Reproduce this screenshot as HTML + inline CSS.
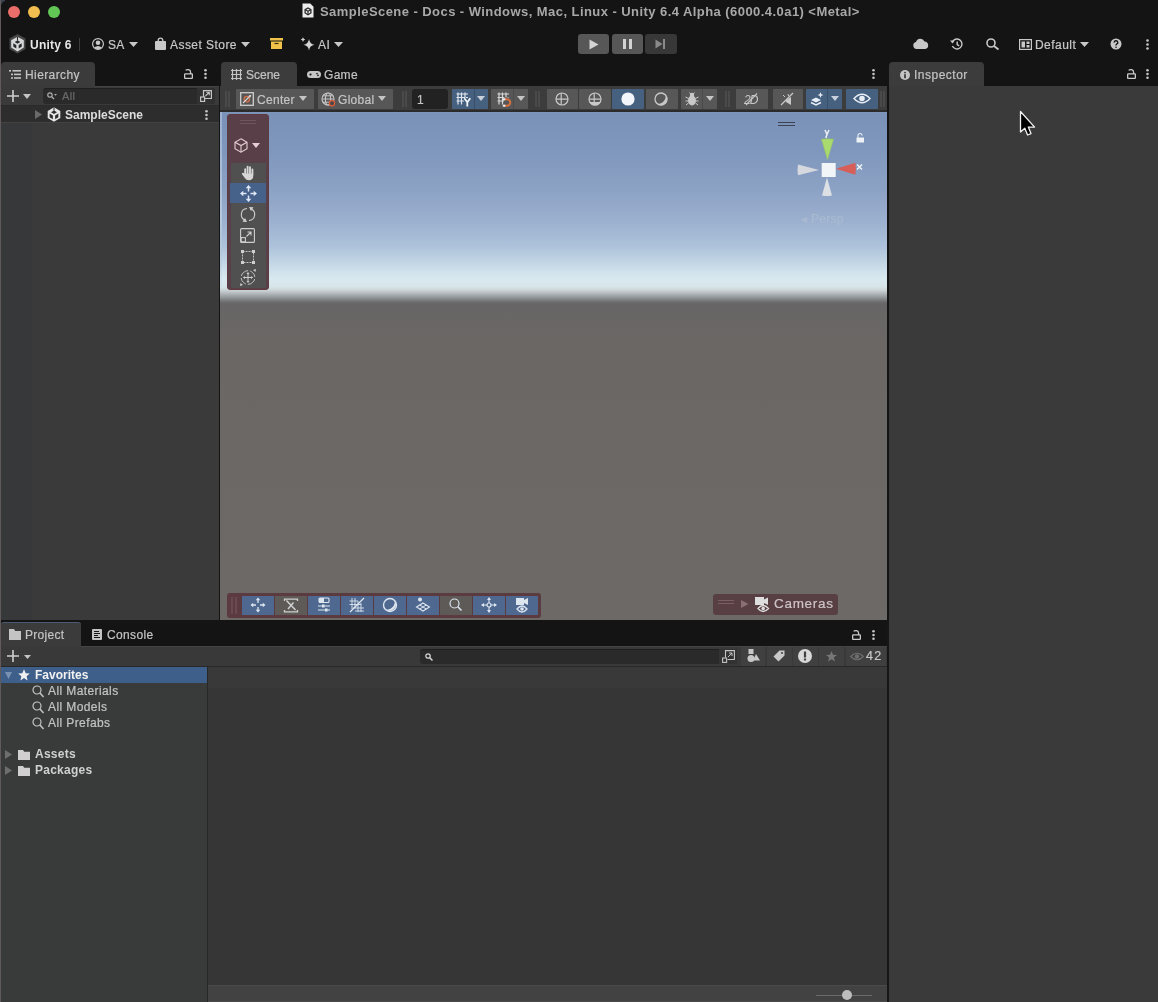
<!DOCTYPE html>
<html><head><meta charset="utf-8">
<style>
*{margin:0;padding:0;box-sizing:border-box}
html,body{width:1158px;height:1002px;overflow:hidden;background:#141414;font-family:"Liberation Sans",sans-serif;color:#c4c4c4}
.a{position:absolute}
.t{position:absolute;white-space:nowrap;font-size:12px;line-height:14px;will-change:transform;-webkit-text-stroke:0.2px currentColor}
svg{position:absolute;overflow:visible}
.t[style*="font-weight:bold"]{-webkit-text-stroke:0}
</style></head><body>
<!-- ============ TITLE BAR ============ -->
<div class="a" style="left:0;top:0;width:5px;height:5px;background:#3c4250"></div><div class="a" style="left:1px;top:1px;width:12px;height:12px;background:#141414;border-top-left-radius:5px"></div><div class="a" style="left:0;top:0;width:1px;height:1002px;background:#625a5a"></div>
<div class="a" style="left:8px;top:6px;width:12px;height:12px;border-radius:50%;background:#e96d68"></div>
<div class="a" style="left:28px;top:6px;width:12px;height:12px;border-radius:50%;background:#f3be50"></div>
<div class="a" style="left:48px;top:6px;width:12px;height:12px;border-radius:50%;background:#62c655"></div>
<svg style="left:302px;top:3px" width="12" height="15" viewBox="0 0 12 15"><path d="M0.5 0.5H8.3L11.5 3.7V14.5H0.5Z" fill="#ececec"/><path d="M6 5L8.9 6.7V10L6 11.7L3.1 10V6.7Z" fill="none" stroke="#2a2a2a" stroke-width="1.3"/><path d="M6 8.3V11.5M6 8.3L3.3 6.8M6 8.3L8.7 6.8" stroke="#2a2a2a" stroke-width="1.2"/></svg>
<div class="t" style="left:320px;top:5px;font-weight:bold;font-size:13px;letter-spacing:0.44px;color:#a8a8a8">SampleScene - Docs - Windows, Mac, Linux - Unity 6.4 Alpha (6000.4.0a1) &lt;Metal&gt;</div>

<!-- ============ MAIN TOOLBAR ============ -->
<svg style="left:9px;top:34px" width="17" height="20" viewBox="0 0 17 20"><path d="M8.5 0L16.5 4.5V15L8.5 19.5L0.5 15V4.5Z" fill="#474747"/><path d="M8.5 2.8L14.8 6.3V13.6L8.5 17.6L2.2 13.6V6.3Z" fill="#d6d8da"/><path d="M8.5 6.2L11.3 8L8.5 9.8L5.7 8Z" fill="#2a2a2a"/><path d="M8.5 2.8V6.5" stroke="#2a2a2a" stroke-width="1.1"/><path d="M4.3 9.2L7.3 10.9V14.5L4.3 12.7Z" fill="#2a2a2a"/><path d="M12.7 9.2L9.7 10.9V14.5L12.7 12.7Z" fill="#2a2a2a"/></svg>
<div class="t" style="left:30px;top:38px;font-weight:bold;color:#e6e6e6;letter-spacing:0.25px">Unity 6</div>
<div class="a" style="left:79px;top:38px;width:1px;height:13px;background:#3c3c3c"></div>
<svg style="left:92px;top:38px" width="12" height="12" viewBox="0 0 12 12"><circle cx="6" cy="6" r="5.4" fill="none" stroke="#c8c8c8" stroke-width="1.2"/><circle cx="6" cy="4.7" r="2.3" fill="#c8c8c8"/><path d="M2.1 9.6Q6 6.3 9.9 9.6A5.3 5.3 0 0 1 2.1 9.6Z" fill="#c8c8c8"/></svg>
<div class="t" style="left:108px;top:38px;color:#c8c8c8;letter-spacing:0.3px">SA</div>
<svg style="left:129px;top:42px" width="9" height="5" viewBox="0 0 9 5"><path d="M0 0H9L4.5 5Z" fill="#c8c8c8"/></svg>
<svg style="left:155px;top:38px" width="11" height="12" viewBox="0 0 11 12"><rect x="0" y="3" width="11" height="9" rx="1" fill="#c8c8c8"/><path d="M3.2 3.5V2.4A2.3 2.3 0 0 1 7.8 2.4V3.5" fill="none" stroke="#c8c8c8" stroke-width="1.3"/></svg>
<div class="t" style="left:170px;top:38px;letter-spacing:0.45px;color:#c8c8c8">Asset Store</div>
<svg style="left:241px;top:42px" width="9" height="5" viewBox="0 0 9 5"><path d="M0 0H9L4.5 5Z" fill="#c8c8c8"/></svg>
<svg style="left:270px;top:38px" width="13" height="11" viewBox="0 0 13 11"><path d="M0 0H13V2.5H0Z" fill="#f0c24a"/><path d="M1 3.5H12V11H1Z" fill="#f0c24a"/><path d="M4.5 5.5H8.5" stroke="#3a2e10" stroke-width="1.2"/></svg>
<svg style="left:300px;top:37px" width="15" height="14" viewBox="0 0 15 14"><path d="M9 2Q9.7 7 14.5 7.8Q9.7 8.6 9 13.6Q8.3 8.6 3.5 7.8Q8.3 7 9 2Z" fill="#d4d4d4"/><path d="M3 0.3Q3.4 2.2 5.3 2.6Q3.4 3 3 4.9Q2.6 3 0.7 2.6Q2.6 2.2 3 0.3Z" fill="#d4d4d4"/></svg>
<div class="t" style="left:318px;top:38px;color:#c8c8c8;letter-spacing:0.5px">AI</div>
<svg style="left:334px;top:42px" width="9" height="5" viewBox="0 0 9 5"><path d="M0 0H9L4.5 5Z" fill="#c8c8c8"/></svg>

<div class="a" style="left:578px;top:34px;width:31px;height:20px;border-radius:3px;background:#575757"></div>
<svg style="left:589px;top:39px" width="10" height="11" viewBox="0 0 10 11"><path d="M0.5 0.5L9.5 5.5L0.5 10.5Z" fill="#d4d4d4"/></svg>
<div class="a" style="left:612px;top:34px;width:31px;height:20px;border-radius:3px;background:#575757"></div>
<div class="a" style="left:623px;top:39px;width:3px;height:10px;background:#d4d4d4"></div>
<div class="a" style="left:629px;top:39px;width:3px;height:10px;background:#d4d4d4"></div>
<div class="a" style="left:645px;top:34px;width:32px;height:20px;border-radius:3px;background:#383838"></div>
<svg style="left:655px;top:39px" width="11" height="10" viewBox="0 0 11 10"><path d="M0.5 0.5L7.5 5L0.5 9.5Z" fill="#8a8a8a"/><path d="M9 0V10" stroke="#8a8a8a" stroke-width="2"/></svg>

<svg style="left:913px;top:39px" width="16" height="10" viewBox="0 0 16 10"><path d="M3.5 10A3.5 3.5 0 0 1 3 3.1A4.5 4.5 0 0 1 11.5 2.5A3.8 3.8 0 0 1 12.2 10Z" fill="#c8c8c8"/></svg>
<svg style="left:950px;top:38px" width="13" height="12" viewBox="0 0 13 12"><path d="M2.2 4.5A5 5 0 1 1 2.4 8" fill="none" stroke="#c8c8c8" stroke-width="1.4"/><path d="M0 2.5L2.6 5.6L4.6 2.4Z" fill="#c8c8c8"/><path d="M7.2 3.5V6.5L9.2 7.8" fill="none" stroke="#c8c8c8" stroke-width="1.4"/></svg>
<svg style="left:986px;top:38px" width="13" height="12" viewBox="0 0 13 12"><circle cx="5" cy="5" r="4" fill="none" stroke="#c8c8c8" stroke-width="1.6"/><path d="M8 8L12.5 11.5" stroke="#c8c8c8" stroke-width="1.8"/></svg>
<svg style="left:1019px;top:39px" width="13" height="11" viewBox="0 0 13 11"><rect x="0.6" y="0.6" width="11.8" height="9.8" fill="none" stroke="#c8c8c8" stroke-width="1.2"/><rect x="2.5" y="2.5" width="3.5" height="6" fill="#c8c8c8"/><rect x="7.5" y="2.5" width="3" height="2.5" fill="#c8c8c8"/><rect x="7.5" y="6" width="3" height="2.5" fill="#c8c8c8"/></svg>
<div class="t" style="left:1035px;top:38px;color:#c8c8c8;letter-spacing:0.45px">Default</div>
<svg style="left:1080px;top:42px" width="9" height="5" viewBox="0 0 9 5"><path d="M0 0H9L4.5 5Z" fill="#c8c8c8"/></svg>
<svg style="left:1110px;top:38px" width="12" height="12" viewBox="0 0 12 12"><circle cx="6" cy="6" r="5.5" fill="#c8c8c8"/><path d="M4.2 4.6A1.8 1.8 0 1 1 6.6 6.2Q6 6.5 6 7.4" fill="none" stroke="#141414" stroke-width="1.4"/><circle cx="6" cy="9.2" r="0.8" fill="#141414"/></svg>
<svg style="left:1146px;top:39px" width="3" height="11" viewBox="0 0 3 11"><circle cx="1.5" cy="1.5" r="1.3" fill="#c8c8c8"/><circle cx="1.5" cy="5.5" r="1.3" fill="#c8c8c8"/><circle cx="1.5" cy="9.5" r="1.3" fill="#c8c8c8"/></svg>

<!-- ============ TABS ROW ============ -->
<div class="a" style="left:1px;top:62px;width:94px;height:25px;background:#3b3b3b;border-radius:4px 4px 0 0"></div>
<svg style="left:9px;top:70px" width="12" height="9" viewBox="0 0 12 9"><rect x="0" y="0" width="2" height="1.6" fill="#c4c4c4"/><rect x="3.5" y="0" width="8.5" height="1.6" fill="#c4c4c4"/><rect x="2" y="3.6" width="2" height="1.6" fill="#c4c4c4"/><rect x="5" y="3.6" width="7" height="1.6" fill="#c4c4c4"/><rect x="2" y="7.2" width="2" height="1.6" fill="#c4c4c4"/><rect x="5" y="7.2" width="7" height="1.6" fill="#c4c4c4"/></svg>
<div class="t" style="left:25px;top:68px;letter-spacing:0.4px">Hierarchy</div>
<svg style="left:184px;top:69px" width="9" height="10" viewBox="0 0 9 10"><rect x="0.65" y="4.9" width="7.7" height="4.45" rx="0.6" fill="none" stroke="#cacaca" stroke-width="1.3"/><path d="M1.6 1.3Q3 0.4 4.6 0.7Q6.6 1.2 6.6 3.2V4.9" fill="none" stroke="#cacaca" stroke-width="1.3"/></svg>
<svg style="left:204px;top:69px" width="3" height="10" viewBox="0 0 3 10"><circle cx="1.5" cy="1.3" r="1.3" fill="#c4c4c4"/><circle cx="1.5" cy="5" r="1.3" fill="#c4c4c4"/><circle cx="1.5" cy="8.7" r="1.3" fill="#c4c4c4"/></svg>

<div class="a" style="left:221px;top:62px;width:76px;height:24px;background:#3c3c3c;border-radius:4px 4px 0 0"></div>
<svg style="left:231px;top:69px" width="11" height="11" viewBox="0 0 11 11"><path d="M1.5 0V11M5.5 0V11M9.5 0V11M0 1.5H11M0 5.5H11M0 9.5H11" stroke="#c4c4c4" stroke-width="1.2"/></svg>
<div class="t" style="left:246px;top:68px">Scene</div>
<svg style="left:307px;top:71px" width="14" height="7" viewBox="0 0 14 7"><path d="M3.5 0H10.5A3.5 3.5 0 0 1 10.5 7H3.5A3.5 3.5 0 0 1 3.5 0Z" fill="#c4c4c4"/><circle cx="3.5" cy="3.5" r="1.1" fill="#141414"/><circle cx="10" cy="2.6" r="0.8" fill="#141414"/><circle cx="11" cy="4.4" r="0.8" fill="#141414"/></svg>
<div class="t" style="left:324px;top:68px;letter-spacing:0.3px">Game</div>
<svg style="left:872px;top:69px" width="3" height="10" viewBox="0 0 3 10"><circle cx="1.5" cy="1.3" r="1.3" fill="#c4c4c4"/><circle cx="1.5" cy="5" r="1.3" fill="#c4c4c4"/><circle cx="1.5" cy="8.7" r="1.3" fill="#c4c4c4"/></svg>

<div class="a" style="left:889px;top:62px;width:95px;height:24px;background:#3c3c3c;border-radius:4px 4px 0 0"></div>
<svg style="left:900px;top:70px" width="10" height="10" viewBox="0 0 10 10"><circle cx="5" cy="5" r="5" fill="#c4c4c4"/><rect x="4.1" y="4.2" width="1.8" height="4" fill="#3c3c3c"/><circle cx="5" cy="2.6" r="0.95" fill="#3c3c3c"/></svg>
<div class="t" style="left:914px;top:68px;letter-spacing:0.5px">Inspector</div>
<svg style="left:1127px;top:69px" width="9" height="10" viewBox="0 0 9 10"><rect x="0.65" y="4.9" width="7.7" height="4.45" rx="0.6" fill="none" stroke="#cacaca" stroke-width="1.3"/><path d="M1.6 1.3Q3 0.4 4.6 0.7Q6.6 1.2 6.6 3.2V4.9" fill="none" stroke="#cacaca" stroke-width="1.3"/></svg>
<svg style="left:1146px;top:69px" width="3" height="10" viewBox="0 0 3 10"><circle cx="1.5" cy="1.3" r="1.3" fill="#c4c4c4"/><circle cx="1.5" cy="5" r="1.3" fill="#c4c4c4"/><circle cx="1.5" cy="8.7" r="1.3" fill="#c4c4c4"/></svg>

<!-- ============ HIERARCHY ============ -->
<div class="a" style="left:1px;top:86px;width:218px;height:534px;background:#3a3a3a"></div><div class="a" style="left:1px;top:122px;width:31px;height:498px;background:#37383a"></div><div class="a" style="left:1px;top:122px;width:218px;height:1px;background:#424242"></div>
<div class="a" style="left:1px;top:86px;width:218px;height:19px;background:#3a3a3a;border-top:1px solid #434343"></div><div class="a" style="left:1px;top:86px;width:94px;height:1px;background:#3a3a3a"></div>
<div class="a" style="left:1px;top:105px;width:218px;height:1px;background:#2a2a2a"></div>
<svg style="left:7px;top:90px" width="12" height="12" viewBox="0 0 12 12"><path d="M6 0V12M0 6H12" stroke="#d0d0d0" stroke-width="1.6"/></svg>
<svg style="left:23px;top:94px" width="8" height="5" viewBox="0 0 8 5"><path d="M0 0H8L4 5Z" fill="#c4c4c4"/></svg>
<div class="a" style="left:43px;top:88px;width:172px;height:16px;border-radius:3px;background:#2a2a2a;border-top:1px solid #1f1f1f"></div>
<div class="a" style="left:197px;top:88px;width:18px;height:16px;border-radius:0 3px 3px 0;background:#313131"></div>
<svg style="left:47px;top:92px" width="10" height="8" viewBox="0 0 10 8"><circle cx="3" cy="3" r="2.2" fill="none" stroke="#b0b0b0" stroke-width="1.2"/><path d="M4.6 4.6L7 7" stroke="#b0b0b0" stroke-width="1.3"/><path d="M7 2H10L8.5 3.8Z" fill="#b0b0b0"/></svg>
<div class="t" style="left:62px;top:89px;color:#696969;font-size:11px;letter-spacing:0.3px">All</div>
<svg style="left:200px;top:90px" width="12" height="12" viewBox="0 0 12 12"><path d="M3.5 7V0.6H11.4V8.5H5" fill="none" stroke="#c4c4c4" stroke-width="1.2"/><rect x="0.6" y="7" width="4" height="4.4" fill="none" stroke="#c4c4c4" stroke-width="1.2"/><path d="M5.5 6L9.3 2.2M6.3 2.2H9.3V5.2" fill="none" stroke="#c4c4c4" stroke-width="1.1"/></svg>
<div class="a" style="left:1px;top:106px;width:218px;height:16px;background:#2d2d2d"></div>
<svg style="left:35px;top:110px" width="7" height="9" viewBox="0 0 7 9"><path d="M0 0L7 4.5L0 9Z" fill="#6a6a6a"/></svg>
<svg style="left:47px;top:107px" width="14" height="15" viewBox="0 0 14 15"><path d="M7 0.3L13.3 3.9V11.1L7 14.7L0.7 11.1V3.9Z" fill="#e6e6e6"/><path d="M7 3.6L10 5.3L7 7L4 5.3Z" fill="#2d2d2d"/><path d="M7 0.3V3.8" stroke="#2d2d2d" stroke-width="1"/><path d="M2.6 6.6L5.9 8.5V12.2L2.6 10.3Z" fill="#2d2d2d"/><path d="M11.4 6.6L8.1 8.5V12.2L11.4 10.3Z" fill="#2d2d2d"/></svg>
<div class="t" style="left:65px;top:108px;font-weight:bold;color:#dcdcdc">SampleScene</div>
<svg style="left:205px;top:110px" width="3" height="10" viewBox="0 0 3 10"><circle cx="1.5" cy="1.3" r="1.3" fill="#c4c4c4"/><circle cx="1.5" cy="5" r="1.3" fill="#c4c4c4"/><circle cx="1.5" cy="8.7" r="1.3" fill="#c4c4c4"/></svg>

<!-- ============ SCENE ============ -->
<div class="a" style="left:220px;top:86px;width:667px;height:25px;background:#3c3c3c"></div>
<div class="a" style="left:220px;top:110px;width:667px;height:2px;background:#2b2b2b"></div>
<div class="a" style="left:225px;top:91px;width:2px;height:16px;background:#4a4a4a"></div><div class="a" style="left:228px;top:91px;width:2px;height:16px;background:#4a4a4a"></div>
<div class="a" style="left:236px;top:89px;width:78px;height:20px;border-radius:1px;background:#575757"></div>
<svg style="left:240px;top:92px" width="14" height="14" viewBox="0 0 14 14"><rect x="0.7" y="0.7" width="12.6" height="12.6" fill="#555" stroke="#cfcfcf" stroke-width="1.3"/><circle cx="6.8" cy="7.2" r="2.7" fill="none" stroke="#cf6e48" stroke-width="1.4"/><path d="M3 11L10.5 3.5" stroke="#d8d8d8" stroke-width="1.1"/><path d="M11.3 2.7L8.6 3.6L10.4 5.4Z" fill="#d8d8d8"/></svg>
<div class="t" style="left:257px;top:93px;letter-spacing:0.3px">Center</div>
<svg style="left:299px;top:96px" width="8" height="5" viewBox="0 0 8 5"><path d="M0 0H8L4 5Z" fill="#c4c4c4"/></svg>
<div class="a" style="left:318px;top:89px;width:75px;height:20px;border-radius:1px;background:#575757"></div>
<svg style="left:321px;top:92px" width="15" height="15" viewBox="0 0 15 15"><circle cx="7" cy="7" r="6" fill="none" stroke="#c4c4c4" stroke-width="1.1"/><ellipse cx="7" cy="7" rx="2.6" ry="6" fill="none" stroke="#c4c4c4" stroke-width="1.1"/><path d="M1 7H13M2 3.8H12M2 10.2H12" stroke="#c4c4c4" stroke-width="1"/><circle cx="11" cy="11.2" r="2.6" fill="#484848" stroke="#e05a3a" stroke-width="1.2"/></svg>
<div class="t" style="left:338px;top:93px;letter-spacing:0.3px">Global</div>
<svg style="left:378px;top:96px" width="8" height="5" viewBox="0 0 8 5"><path d="M0 0H8L4 5Z" fill="#c4c4c4"/></svg>
<div class="a" style="left:402px;top:91px;width:2px;height:16px;background:#4a4a4a"></div><div class="a" style="left:405px;top:91px;width:2px;height:16px;background:#4a4a4a"></div>
<div class="a" style="left:412px;top:89px;width:36px;height:20px;border-radius:3px;background:#222"></div>
<div class="t" style="left:417px;top:93px;color:#c4c4c4">1</div>
<div class="a" style="left:452px;top:89px;width:36px;height:20px;border-radius:1px;background:#46607f"></div>
<div class="a" style="left:474px;top:89px;width:1px;height:20px;background:#3a4f69"></div>
<svg style="left:456px;top:92px" width="16" height="15" viewBox="0 0 16 15"><path d="M2 0.5V12.5M5.5 0.5V12.5M9 0.5V8M0.5 2H12M0.5 5.5H12M0.5 9H8" stroke="#dfe6f0" stroke-width="1.2"/><path d="M8.3 6.3L11.3 10.2L14.3 6.3M11.3 10.2V14.5" fill="none" stroke="#46607f" stroke-width="3.6"/><path d="M8.3 6.3L11.3 10.2L14.3 6.3M11.3 10.2V14.5" fill="none" stroke="#f0f4f8" stroke-width="1.8"/></svg>
<svg style="left:477px;top:96px" width="8" height="5" viewBox="0 0 8 5"><path d="M0 0H8L4 5Z" fill="#c8d0dc"/></svg>
<div class="a" style="left:491px;top:89px;width:37px;height:20px;border-radius:1px;background:#575757"></div>
<div class="a" style="left:513px;top:89px;width:1px;height:20px;background:#4a4a4a"></div>
<svg style="left:497px;top:92px" width="16" height="15" viewBox="0 0 16 15"><path d="M2 0.5V12.5M5.5 0.5V12.5M9 0.5V7M0.5 2H12M0.5 5.5H12M0.5 9H7" stroke="#d8d8d8" stroke-width="1.2"/><path d="M7 7.3H10A3.2 3.2 0 0 1 10 13.7H7" fill="none" stroke="#575757" stroke-width="4"/><path d="M7 7.3H10A3.2 3.2 0 0 1 10 13.7H7" fill="none" stroke="#d9703f" stroke-width="2"/><rect x="5.8" y="6.3" width="2.5" height="2" fill="#eee"/><rect x="5.8" y="12.7" width="2.5" height="2" fill="#eee"/></svg>
<svg style="left:517px;top:96px" width="8" height="5" viewBox="0 0 8 5"><path d="M0 0H8L4 5Z" fill="#c4c4c4"/></svg>
<div class="a" style="left:535px;top:91px;width:2px;height:16px;background:#4a4a4a"></div><div class="a" style="left:538px;top:91px;width:2px;height:16px;background:#4a4a4a"></div>
<div class="a" style="left:547px;top:89px;width:31px;height:20px;border-radius:1px;background:#575757"></div>
<div class="a" style="left:579px;top:89px;width:32px;height:20px;border-radius:1px;background:#575757"></div>
<div class="a" style="left:612px;top:89px;width:32px;height:20px;border-radius:1px;background:#46607f"></div>
<div class="a" style="left:646px;top:89px;width:32px;height:20px;border-radius:1px;background:#575757"></div>
<svg style="left:555px;top:92px" width="14" height="14" viewBox="0 0 14 14"><circle cx="7" cy="7" r="6" fill="none" stroke="#c8c8c8" stroke-width="1.2"/><path d="M1 7.2H13M6.2 1V13" stroke="#c8c8c8" stroke-width="1.2"/></svg>
<svg style="left:588px;top:92px" width="14" height="14" viewBox="0 0 14 14"><circle cx="7" cy="7" r="6" fill="none" stroke="#c8c8c8" stroke-width="1.2"/><path d="M1.5 10A6 6 0 0 0 12.5 10Z" fill="#c8c8c8"/><path d="M1 7.2H13M6.2 1V13" stroke="#c8c8c8" stroke-width="1.2"/></svg>
<svg style="left:621px;top:92px" width="14" height="14" viewBox="0 0 14 14"><circle cx="7" cy="7" r="6.6" fill="#f2f6fb"/></svg>
<svg style="left:654px;top:92px" width="15" height="14" viewBox="0 0 15 14"><circle cx="7" cy="7" r="6" fill="none" stroke="#c8c8c8" stroke-width="1.3"/><path d="M2.5 11.5A6.3 6.3 0 0 0 11.5 2.5A7.5 7.5 0 0 1 2.5 11.5Z" fill="#c8c8c8"/></svg>
<div class="a" style="left:681px;top:89px;width:36px;height:20px;border-radius:1px;background:#575757"></div>
<div class="a" style="left:702px;top:89px;width:1px;height:20px;background:#4a4a4a"></div>
<svg style="left:685px;top:92px" width="14" height="14" viewBox="0 0 14 14"><ellipse cx="7" cy="8.5" rx="4" ry="5" fill="#c8c8c8"/><circle cx="7" cy="3" r="2.2" fill="#c8c8c8"/><path d="M0.5 5L3.5 6.5M0.5 9H3M1 13L3.5 11M13.5 5L10.5 6.5M13.5 9H11M13 13L10.5 11M4.5 0.5L5.8 2M9.5 0.5L8.2 2" stroke="#c8c8c8" stroke-width="1"/></svg>
<svg style="left:706px;top:96px" width="8" height="5" viewBox="0 0 8 5"><path d="M0 0H8L4 5Z" fill="#c4c4c4"/></svg>
<div class="a" style="left:725px;top:91px;width:2px;height:16px;background:#4a4a4a"></div><div class="a" style="left:728px;top:91px;width:2px;height:16px;background:#4a4a4a"></div>
<div class="a" style="left:736px;top:89px;width:32px;height:20px;border-radius:1px;background:#575757"></div>
<svg style="left:744px;top:92px;will-change:transform" width="16" height="14" viewBox="0 0 16 14"><text x="0" y="11.5" font-family="Liberation Sans" font-size="12" fill="#c8c8c8" letter-spacing="-1" font-style="italic">2D</text><path d="M2 13L13 1.5" stroke="#c8c8c8" stroke-width="1.1"/></svg>
<div class="a" style="left:773px;top:89px;width:30px;height:20px;border-radius:1px;background:#575757"></div>
<svg style="left:780px;top:92px" width="14" height="14" viewBox="0 0 14 14"><path d="M1 13L13 1" stroke="#c8c8c8" stroke-width="1.2"/><path d="M6 8L11 5V13L6 10Z" fill="#c8c8c8"/><path d="M3 3L5 5M8 2L8.5 4" stroke="#c8c8c8" stroke-width="1"/></svg>
<div class="a" style="left:806px;top:89px;width:36px;height:20px;border-radius:1px;background:#46607f"></div>
<div class="a" style="left:827px;top:89px;width:1px;height:20px;background:#3a4f69"></div>
<svg style="left:810px;top:92px" width="14" height="14" viewBox="0 0 14 14"><path d="M1 8L6 5.5L11 8L6 10.5Z" fill="#e8eef6"/><path d="M1 10.5L6 13L11 10.5" fill="none" stroke="#e8eef6" stroke-width="1.4"/><path d="M10.5 0L11.3 2.2L13.5 3L11.3 3.8L10.5 6L9.7 3.8L7.5 3L9.7 2.2Z" fill="#e8eef6"/></svg>
<svg style="left:831px;top:96px" width="8" height="5" viewBox="0 0 8 5"><path d="M0 0H8L4 5Z" fill="#c8d0dc"/></svg>
<div class="a" style="left:846px;top:89px;width:32px;height:20px;border-radius:1px;background:#46607f"></div>
<svg style="left:853px;top:93px" width="18" height="11" viewBox="0 0 18 11"><path d="M1 5.5Q9 -3 17 5.5Q9 14 1 5.5Z" fill="none" stroke="#e8eef6" stroke-width="1.4"/><circle cx="9" cy="5.5" r="2.8" fill="#e8eef6"/></svg>
<div class="a" style="left:880px;top:91px;width:2px;height:16px;background:#4a4a4a"></div><div class="a" style="left:883px;top:91px;width:2px;height:16px;background:#4a4a4a"></div>
<div class="a" style="left:220px;top:112px;width:667px;height:508px;background:linear-gradient(180deg,#7f97bd 0px,#7a92b8 2px,#7f97bc 38px,#8ca2c5 78px,#9bb0ce 108px,#acc1da 133px,#c2d5e5 150px,#d0e2eb 160px,#d9e9ef 168px,#d7e5e8 175px,#cdd5d7 178px,#bfc5c8 180px,#a6abae 183px,#8f9396 186px,#7d7f82 188px,#6e6d70 190px,#686566 192px,#6a6765 228px,#6c6866 338px,#6c6967 508px)"></div><div class="a" style="left:220px;top:112px;width:2px;height:180px;background:linear-gradient(#9cb0d0,#b5c8de 60%,rgba(200,215,230,0))"></div>
<!-- tools overlay -->
<div class="a" style="left:227px;top:114px;width:42px;height:176px;border-radius:3px;background:#583f48;border:1px solid #5e3a40"></div>
<div class="a" style="left:240px;top:120px;width:16px;height:1px;background:#6e5660"></div><div class="a" style="left:240px;top:123px;width:16px;height:1px;background:#6e5660"></div>
<svg style="left:234px;top:138px" width="14" height="15" viewBox="0 0 14 15"><path d="M7 0.8L13 4.2V10.8L7 14.2L1 10.8V4.2Z" fill="none" stroke="#e6cfd4" stroke-width="1.1"/><path d="M1 4.2L7 7.6L13 4.2M7 7.6V14.2" fill="none" stroke="#e6cfd4" stroke-width="1.1"/></svg>
<svg style="left:252px;top:143px" width="8" height="5" viewBox="0 0 8 5"><path d="M0 0H8L4 5Z" fill="#e6cfd4"/></svg>
<div class="a" style="left:231px;top:163px;width:35px;height:125px;background:#505050"></div>
<div class="a" style="left:230px;top:183px;width:36px;height:20px;background:#46618a"></div>
<svg style="left:241px;top:165px" width="15" height="16" viewBox="0 0 15 16"><path d="M4.2 9V4.2M6.6 8.2V1.6M9 8.2V2.2M11.4 9V4.4" stroke="#d6d6d6" stroke-width="1.9" stroke-linecap="round"/><path d="M3.3 8.4H12.3V10.5Q12.3 15.2 7.8 15.2Q5.2 15.2 3.8 13L1 9.3A1.1 1.1 0 0 1 2.7 8Z" fill="#d6d6d6"/></svg>
<svg style="left:240px;top:185px" width="17" height="17" viewBox="0 0 17 17"><path d="M8.5 2.5V6.5M8.5 10.5V14.5M2.5 8.5H6.5M10.5 8.5H14.5" stroke="#dfe8f4" stroke-width="1.5"/><path d="M8.5 0L11.3 3.3H5.7ZM8.5 17L11.3 13.7H5.7ZM0 8.5L3.3 5.7V11.3ZM17 8.5L13.7 5.7V11.3Z" fill="#dfe8f4"/></svg>
<svg style="left:240px;top:207px" width="16" height="15" viewBox="0 0 16 15"><path d="M10.5 1.8A6 6 0 0 1 9 13.5M5.5 13.2A6 6 0 0 1 7 1.5" fill="none" stroke="#cfcfcf" stroke-width="1.1"/><path d="M9 0L13.5 0.3L11 4Z" fill="#cfcfcf"/><path d="M7 15L2.5 14.7L5 11Z" fill="#cfcfcf"/></svg>
<svg style="left:240px;top:228px" width="15" height="15" viewBox="0 0 15 15"><rect x="0.6" y="0.6" width="13.8" height="13.8" rx="1" fill="none" stroke="#cfcfcf" stroke-width="1.1"/><rect x="1.2" y="9.6" width="4.2" height="4.2" fill="#4f4f4f" stroke="#cfcfcf" stroke-width="1.1"/><path d="M6.5 8.5L11 4M7.5 4H11V7.5" fill="none" stroke="#cfcfcf" stroke-width="1.1"/></svg>
<svg style="left:241px;top:250px" width="14" height="14" viewBox="0 0 14 14"><rect x="1.5" y="1.5" width="11" height="11" fill="none" stroke="#cfcfcf" stroke-width="0.9" stroke-dasharray="2 1"/><rect x="0" y="0" width="3" height="3" fill="#cfcfcf"/><rect x="11" y="0" width="3" height="3" fill="#cfcfcf"/><rect x="0" y="11" width="3" height="3" fill="#cfcfcf"/><rect x="11" y="11" width="3" height="3" fill="#cfcfcf"/></svg>
<svg style="left:240px;top:269px" width="16" height="17" viewBox="0 0 16 17"><path d="M12.5 3.5A6.5 6.5 0 0 1 12.5 13.5M3.5 13.5A6.5 6.5 0 0 1 3.5 3.5M3.5 3.5A6.5 6.5 0 0 1 12.5 3.5M12.5 13.5A6.5 6.5 0 0 1 3.5 13.5" fill="none" stroke="#cfcfcf" stroke-width="0.9" stroke-dasharray="5 2"/><path d="M8 4V13M3.5 8.5H12.5" stroke="#cfcfcf" stroke-width="1"/><path d="M8 3L9.5 5H6.5ZM8 14L9.5 12H6.5ZM3 8.5L5 7V10ZM13 8.5L11 7V10Z" fill="#cfcfcf"/><path d="M16 0L15.5 3L13 1Z M0 17L0.5 14L3 16Z" fill="#cfcfcf"/></svg>
<!-- gizmo -->
<div class="a" style="left:778px;top:122px;width:17px;height:1px;background:#3c4252"></div><div class="a" style="left:778px;top:125px;width:17px;height:1px;background:#3c4252"></div>
<svg style="left:796px;top:128px;filter:blur(0.35px)" width="70" height="70" viewBox="0 0 70 70"><path d="M25.5 11.3Q31.5 10.3 37.5 11.3L31.5 31.5Z" fill="#a9da6e" stroke="#9cc468" stroke-width="0.6"/><path d="M26 67.6Q31 68.6 36 67.6L31 49.5Z" fill="#dcdfe4"/><path d="M2 36.5Q1 42 2 47.3L23 42Z" fill="#d5d8de"/><path d="M59.3 34.7Q60.5 40.7 59.3 46.7L39.9 40.7Z" fill="#d65f5a"/><rect x="25.7" y="35" width="14" height="14" fill="#f2f5f8"/><path d="M29 2L31 6.5L33 2M31 6.5L29.8 10" fill="none" stroke="#eef2f6" stroke-width="1.5"/><path d="M61 36.5L66 41.5M66 36.5L61 41.5" stroke="#eef2f6" stroke-width="1.5"/><rect x="60.5" y="9.5" width="7.5" height="5" fill="#eef2f6"/><path d="M62 9.5V7.5A2 2 0 0 1 66 7.5" fill="none" stroke="#eef2f6" stroke-width="1.1"/></svg>
<div class="t" style="left:801px;top:212px;color:#a9bad0;font-size:12px;letter-spacing:0.3px">&#9666; Persp</div>
<!-- bottom overlay -->
<div class="a" style="left:227px;top:593px;width:314px;height:25px;border-radius:3px;background:#5b3a40"></div>
<div class="a" style="left:231px;top:597px;width:2px;height:17px;background:#6a4a50"></div><div class="a" style="left:235px;top:597px;width:2px;height:17px;background:#6a4a50"></div>
<div class="a" style="left:242px;top:596px;width:32px;height:19px;background:#4f6890"></div>
<div class="a" style="left:275px;top:596px;width:32px;height:19px;background:#5e5a58"></div>
<div class="a" style="left:308px;top:596px;width:32px;height:19px;background:#4f6890"></div>
<div class="a" style="left:341px;top:596px;width:32px;height:19px;background:#4f6890"></div>
<div class="a" style="left:374px;top:596px;width:32px;height:19px;background:#4f6890"></div>
<div class="a" style="left:407px;top:596px;width:32px;height:19px;background:#4f6890"></div>
<div class="a" style="left:440px;top:596px;width:32px;height:19px;background:#5e5a58"></div>
<div class="a" style="left:473px;top:596px;width:32px;height:19px;background:#4f6890"></div>
<div class="a" style="left:506px;top:596px;width:32px;height:19px;background:#4f6890"></div>
<svg style="left:250px;top:597px" width="16" height="16" viewBox="0 0 16 16"><path d="M8 2.5V6M8 10V13.5M2.5 8H6M10 8H13.5" stroke="#dde5ef" stroke-width="1.3"/><path d="M8 0.5L10.3 3.2H5.7ZM8 15.5L10.3 12.8H5.7ZM0.5 8L3.2 5.7V10.3ZM15.5 8L12.8 5.7V10.3Z" fill="#dde5ef"/></svg>
<svg style="left:283px;top:598px" width="16" height="15" viewBox="0 0 16 15"><path d="M1.5 3V1.2H14.5V3M1.5 12V13.8H14.5V12" fill="none" stroke="#d0d0d0" stroke-width="1.3"/><path d="M3.5 2.5L12.5 12M10.5 4.5L5 11" stroke="#d0d0d0" stroke-width="1.5"/></svg>
<svg style="left:316px;top:597px" width="16" height="16" viewBox="0 0 16 16"><rect x="3" y="1" width="10" height="4.5" rx="1" fill="none" stroke="#dde5ef" stroke-width="1.1"/><rect x="3" y="1" width="5" height="4.5" fill="#dde5ef"/><path d="M2 9H14M2 13H14" stroke="#dde5ef" stroke-width="1.1"/><rect x="6" y="7.5" width="2.5" height="3" fill="#dde5ef"/><rect x="9" y="11.5" width="2.5" height="3" fill="#dde5ef"/></svg>
<svg style="left:349px;top:597px" width="16" height="16" viewBox="0 0 16 16"><path d="M3 1V12M6 1V11M9 4V15M12 6V15M0.5 4H9M0.5 7.5H12M4 11H15M6 14H15" stroke="#dde5ef" stroke-width="0.9"/><path d="M1 15L15 1" stroke="#dde5ef" stroke-width="1.2"/></svg>
<svg style="left:382px;top:597px" width="16" height="16" viewBox="0 0 16 16"><circle cx="8" cy="8" r="6.5" fill="none" stroke="#dde5ef" stroke-width="1.4"/><path d="M3.4 12.6A6.6 6.6 0 0 0 12.6 3.4A8 8 0 0 1 3.4 12.6Z" fill="#dde5ef"/></svg>
<svg style="left:415px;top:597px" width="16" height="16" viewBox="0 0 16 16"><circle cx="5" cy="2.5" r="2" fill="#dde5ef"/><path d="M8 6L14.5 10L8 14L1.5 10Z" fill="none" stroke="#dde5ef" stroke-width="1.1"/><path d="M4.8 8L11.2 12M11.2 8L4.8 12" stroke="#dde5ef" stroke-width="1"/></svg>
<svg style="left:448px;top:597px" width="16" height="16" viewBox="0 0 16 16"><circle cx="6.5" cy="6.5" r="4.5" fill="none" stroke="#dde5ef" stroke-width="1.2"/><path d="M9.8 9.8L13.5 13.5" stroke="#dde5ef" stroke-width="1.6"/></svg>
<svg style="left:481px;top:597px" width="16" height="16" viewBox="0 0 16 16"><circle cx="8" cy="8" r="2" fill="none" stroke="#dde5ef" stroke-width="1.2"/><path d="M8 1V6M8 10V15M1 8H6M10 8H15" stroke="#dde5ef" stroke-width="1.1"/><path d="M8 0L10 3H6ZM8 16L10 13H6ZM0 8L3 6V10ZM16 8L13 6V10Z" fill="#dde5ef"/></svg>
<svg style="left:514px;top:597px" width="16" height="16" viewBox="0 0 16 16"><rect x="2" y="1" width="8" height="7" fill="#dde5ef"/><path d="M10 3L14 1V8L10 6Z" fill="#dde5ef"/><path d="M3 12Q8 6 13 12Q8 18 3 12Z" fill="#4f6890" stroke="#dde5ef" stroke-width="1.3"/><circle cx="8" cy="12" r="1.8" fill="#dde5ef"/></svg>
<div class="a" style="left:713px;top:594px;width:125px;height:21px;border-radius:3px;background:#573f44"></div>
<div class="a" style="left:718px;top:600px;width:16px;height:1px;background:#7a6065"></div><div class="a" style="left:718px;top:603px;width:16px;height:1px;background:#7a6065"></div>
<svg style="left:741px;top:600px" width="8" height="8" viewBox="0 0 8 8"><path d="M0 0L7.5 4L0 8Z" fill="#8a7075"/></svg>
<svg style="left:755px;top:597px" width="15" height="15" viewBox="0 0 15 15"><rect x="0" y="0" width="9" height="8" fill="#ddd"/><path d="M9 2.5L13 0.5V8L9 6Z" fill="#ddd"/><path d="M3 11.5Q8 5.5 13.5 11.5Q8 17.5 3 11.5Z" fill="#5b3f44" stroke="#ddd" stroke-width="1.3"/><circle cx="8.2" cy="11.5" r="1.8" fill="#ddd"/></svg>
<div class="t" style="left:774px;top:597px;font-size:13.5px;letter-spacing:0.7px;color:#cdc4c7">Cameras</div>
<!-- ============ PROJECT ============ -->
<div class="a" style="left:1px;top:622px;width:80px;height:25px;background:#3b3b3b;border-radius:3px 3px 0 0;border-top:1px solid #4a5a72"></div>
<svg style="left:9px;top:629px" width="12" height="11" viewBox="0 0 12 11"><path d="M0 0H5L6.2 2H12V11H0Z" fill="#c4c4c4"/></svg>
<div class="t" style="left:25px;top:628px;letter-spacing:0.3px">Project</div>
<svg style="left:92px;top:629px" width="10" height="11" viewBox="0 0 10 11"><rect x="0" y="0" width="10" height="11" rx="1" fill="#c4c4c4"/><path d="M2 2.5H7M2 4.5H8M2 6.5H6M2 8.5H8" stroke="#141414" stroke-width="1"/></svg>
<div class="t" style="left:107px;top:628px;letter-spacing:0.35px">Console</div>
<svg style="left:852px;top:630px" width="9" height="10" viewBox="0 0 9 10"><rect x="0.65" y="4.9" width="7.7" height="4.45" rx="0.6" fill="none" stroke="#cacaca" stroke-width="1.3"/><path d="M1.6 1.3Q3 0.4 4.6 0.7Q6.6 1.2 6.6 3.2V4.9" fill="none" stroke="#cacaca" stroke-width="1.3"/></svg>
<svg style="left:872px;top:630px" width="3" height="10" viewBox="0 0 3 10"><circle cx="1.5" cy="1.3" r="1.3" fill="#c4c4c4"/><circle cx="1.5" cy="5" r="1.3" fill="#c4c4c4"/><circle cx="1.5" cy="8.7" r="1.3" fill="#c4c4c4"/></svg>
<div class="a" style="left:1px;top:646px;width:886px;height:356px;background:#363636"></div>
<div class="a" style="left:1px;top:646px;width:886px;height:20px;background:#393939;border-top:1px solid #454545"></div><div class="a" style="left:1px;top:646px;width:80px;height:1px;background:#393939"></div>
<div class="a" style="left:1px;top:666px;width:886px;height:1px;background:#282828"></div>
<svg style="left:7px;top:650px" width="12" height="12" viewBox="0 0 12 12"><path d="M6 0V12M0 6H12" stroke="#d0d0d0" stroke-width="1.6"/></svg>
<svg style="left:24px;top:655px" width="7" height="4" viewBox="0 0 7 4"><path d="M0 0H7L3.5 4Z" fill="#c4c4c4"/></svg>
<div class="a" style="left:420px;top:649px;width:299px;height:15px;border-radius:3px 0 0 3px;background:#2a2a2a;border-top:1px solid #1f1f1f"></div>
<svg style="left:425px;top:653px" width="8" height="8" viewBox="0 0 8 8"><circle cx="3" cy="3" r="2.2" fill="none" stroke="#d0d0d0" stroke-width="1.3"/><path d="M4.6 4.6L7.5 7.5" stroke="#d0d0d0" stroke-width="1.5"/></svg>
<div class="a" style="left:719px;top:649px;width:18px;height:15px;background:#333"></div>
<svg style="left:722px;top:650px" width="13" height="13" viewBox="0 0 13 13"><path d="M3.5 7.5V0.6H12.4V9.5H5.5" fill="none" stroke="#c4c4c4" stroke-width="1.1"/><rect x="0.6" y="8" width="4" height="4.4" fill="none" stroke="#c4c4c4" stroke-width="1.1"/><path d="M6 7L10 3M7 3H10V6" fill="none" stroke="#c4c4c4" stroke-width="1"/></svg>
<div class="a" style="left:741px;top:647px;width:24px;height:19px;background:#404040"></div>
<div class="a" style="left:767px;top:647px;width:25px;height:19px;background:#404040"></div>
<div class="a" style="left:793px;top:647px;width:25px;height:19px;background:#404040"></div>
<div class="a" style="left:819px;top:647px;width:25px;height:19px;background:#404040"></div>
<div class="a" style="left:846px;top:647px;width:40px;height:19px;background:#404040"></div>
<svg style="left:747px;top:649px" width="13" height="13" viewBox="0 0 13 13"><rect x="1.5" y="0" width="5" height="5" fill="#c8c8c8"/><circle cx="4" cy="9.5" r="3.5" fill="#c8c8c8"/><path d="M9 5L13 11.5H6Z" fill="#c8c8c8"/></svg>
<svg style="left:773px;top:650px" width="12" height="12" viewBox="0 0 12 12"><path d="M6.5 0.5H11.5V5.5L5.5 11.5L0.5 6.5Z" fill="#c8c8c8"/><circle cx="9" cy="3" r="1" fill="#404040"/></svg>
<svg style="left:798px;top:649px" width="14" height="14" viewBox="0 0 14 14"><circle cx="7" cy="7" r="7" fill="#d8d8d8"/><rect x="5.9" y="2.5" width="2.2" height="6" fill="#404040"/><rect x="5.9" y="9.5" width="2.2" height="2" fill="#404040"/></svg>
<svg style="left:826px;top:651px" width="11" height="11" viewBox="0 0 11 11"><path d="M5.5 0L7 3.8L11 4L7.8 6.5L9 10.5L5.5 8.2L2 10.5L3.2 6.5L0 4L4 3.8Z" fill="#777"/></svg>
<svg style="left:850px;top:652px" width="14" height="9" viewBox="0 0 14 9"><path d="M0.7 4.5Q7 -2 13.3 4.5Q7 11 0.7 4.5Z" fill="none" stroke="#6e6e6e" stroke-width="1.1"/><circle cx="7" cy="4.5" r="2.2" fill="#6e6e6e"/></svg>
<div class="t" style="left:866px;top:649px;color:#c8c8c8;font-size:12.5px;letter-spacing:1.2px">42</div>
<div class="a" style="left:1px;top:667px;width:206px;height:335px;background:#393b3b"></div>
<div class="a" style="left:207px;top:667px;width:1px;height:335px;background:#272727"></div>
<div class="a" style="left:208px;top:667px;width:679px;height:21px;background:#393939"></div>
<div class="a" style="left:1px;top:667px;width:206px;height:16px;background:#3e5f8a"></div>
<svg style="left:5px;top:672px" width="7" height="7" viewBox="0 0 7 7"><path d="M0 0H7L3.5 7Z" fill="#7a92b2"/></svg>
<svg style="left:18px;top:669px" width="12" height="12" viewBox="0 0 12 12"><path d="M6 0.3L7.7 4.2L11.8 4.5L8.6 7.2L9.6 11.4L6 9.1L2.4 11.4L3.4 7.2L0.2 4.5L4.3 4.2Z" fill="#f0f0f0"/></svg>
<div class="t" style="left:35px;top:668px;font-weight:bold;color:#f2f2f2">Favorites</div>
<svg style="left:32px;top:685px" width="12" height="13" viewBox="0 0 12 13"><circle cx="5" cy="5" r="4" fill="none" stroke="#c4c4c4" stroke-width="1.2"/><path d="M7.8 7.8L11.5 12" stroke="#c4c4c4" stroke-width="1.5"/></svg>
<div class="t" style="left:48px;top:684px;letter-spacing:0.4px">All Materials</div>
<svg style="left:32px;top:701px" width="12" height="13" viewBox="0 0 12 13"><circle cx="5" cy="5" r="4" fill="none" stroke="#c4c4c4" stroke-width="1.2"/><path d="M7.8 7.8L11.5 12" stroke="#c4c4c4" stroke-width="1.5"/></svg>
<div class="t" style="left:48px;top:700px;letter-spacing:0.4px">All Models</div>
<svg style="left:32px;top:717px" width="12" height="13" viewBox="0 0 12 13"><circle cx="5" cy="5" r="4" fill="none" stroke="#c4c4c4" stroke-width="1.2"/><path d="M7.8 7.8L11.5 12" stroke="#c4c4c4" stroke-width="1.5"/></svg>
<div class="t" style="left:48px;top:716px;letter-spacing:0.4px">All Prefabs</div>
<svg style="left:5px;top:750px" width="7" height="9" viewBox="0 0 7 9"><path d="M0 0L7 4.5L0 9Z" fill="#6e6e6e"/></svg>
<svg style="left:18px;top:750px" width="12" height="10" viewBox="0 0 12 10"><path d="M0 0H5L6.2 1.8H12V10H0Z" fill="#d0d0d0"/></svg>
<div class="t" style="left:35px;top:747px;font-weight:bold;color:#d0d0d0;letter-spacing:0.25px">Assets</div>
<svg style="left:5px;top:766px" width="7" height="9" viewBox="0 0 7 9"><path d="M0 0L7 4.5L0 9Z" fill="#6e6e6e"/></svg>
<svg style="left:18px;top:766px" width="12" height="10" viewBox="0 0 12 10"><path d="M0 0H5L6.2 1.8H12V10H0Z" fill="#d0d0d0"/></svg>
<div class="t" style="left:35px;top:763px;font-weight:bold;color:#d0d0d0;letter-spacing:0.25px">Packages</div>
<div class="a" style="left:208px;top:985px;width:679px;height:17px;background:#424242;border-top:1px solid #4a4a4a;border-bottom:1px solid #4b4b4b"></div>
<div class="a" style="left:816px;top:995px;width:56px;height:1px;background:#6a6a6a"></div>
<div class="a" style="left:842px;top:990px;width:10px;height:10px;border-radius:50%;background:#bdbdbd"></div>
<div class="a" style="left:887px;top:622px;width:2px;height:380px;background:#161616"></div>
<!-- ============ INSPECTOR ============ -->
<div class="a" style="left:889px;top:86px;width:269px;height:916px;background:#3a3a3a"></div>
<svg style="left:1020px;top:111px" width="16" height="25" viewBox="0 0 16 25"><path d="M0.5 0.5V21L4.8 17.2L7.6 24L11 22.6L8.3 16.1H14.6Z" fill="#000" stroke="#f2f2f2" stroke-width="1.3" stroke-linejoin="round"/></svg>
</body></html>
